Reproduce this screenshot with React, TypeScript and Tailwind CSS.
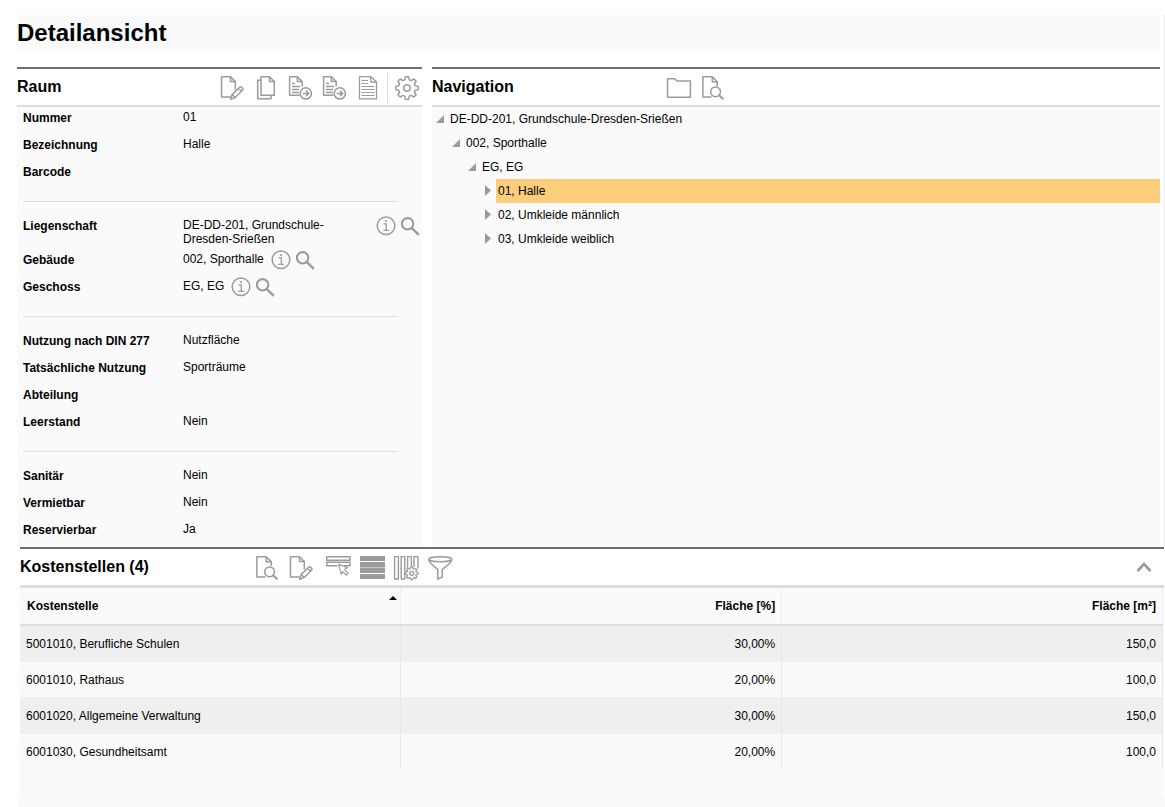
import { FC, ReactNode } from "react";

const gearPath = (cx: number, cy: number, outer: number, inner: number) => {
	const point = (deg: number, r: number) => {
		const a = (deg * Math.PI) / 180;
		return `${(cx + r * Math.sin(a)).toFixed(2)} ${(cy - r * Math.cos(a)).toFixed(2)}`;
	};
	let d = "";
	for (let i = 0; i < 8; i++) {
		const a = i * 45;
		d += `${i === 0 ? "M" : "L"}${point(a - 9, outer)}`;
		d += `Q${point(a, outer + 0.4)} ${point(a + 9, outer)}`;
		d += `L${point(a + 12, inner + 0.6)}Q${point(a + 22.5, inner - 1)} ${point(a + 33, inner + 0.6)}`;
	}
	return d + "Z";
};

const Icon: FC<{ children: ReactNode }> = ({ children }) => (
	<svg
		viewBox="0 0 26 26"
		className="w-[26px] h-[26px]"
		fill="none"
		stroke="#9b9b9b"
		strokeWidth="1.5"
		strokeLinejoin="round"
	>
		{children}
	</svg>
);

const EditIcon = () => (
	<Icon>
		<path d="M16.3 14.5V6.5L11.5 1.7H2.5V22H11.5M11.5 1.7V6.5H16.3" />
		<path d="M11.6 24.2L13.1 19.6L20.9 12Q21.6 11.4 22.4 12.1L23.7 13.4Q24.4 14.1 23.7 14.9L16.2 22.6L11.6 24.2ZM13.3 19.8L16 22.4M19.6 13.4L22.3 16.1" />
	</Icon>
);

const CopyIcon = () => (
	<Icon>
		<path d="M7.8 5.2H4.7V23.7H18V20.5" />
		<path d="M8 1.7H16.5L21.3 6.5V20.2H8ZM16.5 1.7V6.5H21.3" />
	</Icon>
);

const ExportIcon = () => (
	<Icon>
		<path d="M15.2 11.5V6.5L10.4 1.7H2.6V20.2H12.5M10.4 1.7V6.5H15.2" />
		<path d="M5 8.5H8M5 11.5H13M5 14.5H12M5 17.5H12" strokeWidth="1.3" />
		<circle cx="18.8" cy="18.4" r="5.6" />
		<path d="M15.6 18.4H21.6M19 15.7L21.7 18.4L19 21.1" />
	</Icon>
);

const ListIcon = () => (
	<Icon>
		<path d="M4.5 1.6H15.7L21.5 7V23.8H4.5ZM15.7 1.6V7H21.5" strokeWidth="1.3" />
		<path d="M6.5 5.5H13M6.5 8.5H13M6.5 11.5H19.5M6.5 14.5H19.5M6.5 17.5H19.5M6.5 20.5H19.5" strokeWidth="1" />
	</Icon>
);

const GearIcon = () => (
	<Icon>
		<path d={gearPath(13, 13, 11.2, 8.6)} />
		<circle cx="13" cy="13" r="3.2" />
	</Icon>
);

const FolderIcon = () => (
	<Icon>
		<path d="M1.5 22.3V3.7H9L10.8 6H24.4V22.3Z" />
	</Icon>
);

const PreviewIcon = () => (
	<Icon>
		<path d="M17.3 11V6.8L12.3 1.7H2.9V22H11.5M12.3 1.7V6.8H17.3" />
		<circle cx="15.6" cy="16.8" r="4.9" />
		<path d="M19 20.2L23.4 24.3" strokeWidth="2" />
	</Icon>
);

const SelectIcon = () => (
	<Icon>
		<path d="M1.7 1.7H25V5.2H1.7ZM12.5 10.8H1.7V7.3H25V10.8H19" />
		<path d="M13.6 9.4L22.6 12.6L19.6 14.6L23.2 18.4L21.4 20.2L17.7 16.6L16.2 19.2Z" fill="#fff" strokeWidth="1.2" />
	</Icon>
);

const RowsIcon = () => (
	<Icon>
		<g fill="#9b9b9b" stroke="none">
			<rect x="1" y="1" width="25" height="5" />
			<rect x="1" y="7" width="25" height="5" />
			<rect x="1" y="12" width="25" height="1" fill="#c8c8c8" />
			<rect x="1" y="13" width="25" height="5" />
			<rect x="1" y="19" width="25" height="5" />
		</g>
	</Icon>
);

const ColumnsIcon = () => (
	<Icon>
		<path d="M1.6 1.6H5.4V24H1.6ZM8.2 1.6H11.8V24H8.2ZM14.6 24V1.6H18.4V12M21 12V1.6H25V13.5" strokeWidth="1.4" />
		<path d={gearPath(18.7, 18.3, 6.2, 4.9)} fill="#fff" strokeWidth="1.3" />
		<circle cx="18.7" cy="18.3" r="2" strokeWidth="1.3" />
	</Icon>
);

const FilterIcon = () => (
	<Icon>
		<ellipse cx="13.3" cy="4.3" rx="11.5" ry="2.5" />
		<path d="M1.8 4.5C1.8 8 8 12 10.8 14.5V24.2L15.2 22V14.5C18 12 24.8 8 24.8 4.5" />
	</Icon>
);

const InfoIcon = () => (
	<svg viewBox="0 0 20 20" className="w-5 h-5" fill="none" stroke="#9b9b9b">
		<circle cx="10" cy="9.7" r="8.8" strokeWidth="1.5" />
		<circle cx="10" cy="5" r="1.1" fill="#9b9b9b" stroke="none" />
		<path d="M7.6 7.8H10.3V14.2M7.3 14.3H13" strokeWidth="1.3" />
	</svg>
);

const SearchIcon = () => (
	<svg viewBox="0 0 20 20" className="w-5 h-5" fill="none" stroke="#9b9b9b">
		<circle cx="6.6" cy="7.8" r="5.7" strokeWidth="2.1" />
		<path d="M10.6 11.8L17.8 18.8" strokeWidth="2.4" />
	</svg>
);

type ITool = { label: string; icon: ReactNode };

const ToolButtons: FC<{ tools: ITool[] }> = ({ tools }) => (
	<div className="flex gap-2">
		{tools.map((tool) => (
			<button key={tool.label} type="button" aria-label={tool.label}>
				{tool.icon}
			</button>
		))}
	</div>
);

const roomTools: ITool[] = [
	{ label: "Bearbeiten", icon: <EditIcon /> },
	{ label: "Kopieren", icon: <CopyIcon /> },
	{ label: "Exportieren", icon: <ExportIcon /> },
	{ label: "Bericht exportieren", icon: <ExportIcon /> },
	{ label: "Bericht", icon: <ListIcon /> },
];

const navTools: ITool[] = [
	{ label: "Ordner", icon: <FolderIcon /> },
	{ label: "Vorschau", icon: <PreviewIcon /> },
];

const recordTools: ITool[] = [
	{ label: "Vorschau", icon: <PreviewIcon /> },
	{ label: "Bearbeiten", icon: <EditIcon /> },
];

const tableTools: ITool[] = [
	{ label: "Auswahl", icon: <SelectIcon /> },
	{ label: "Zeilen", icon: <RowsIcon /> },
	{ label: "Spalten", icon: <ColumnsIcon /> },
	{ label: "Filter", icon: <FilterIcon /> },
];

type IField = { label: string; value?: string; linked?: boolean };

const fieldGroups: IField[][] = [
	[
		{ label: "Nummer", value: "01" },
		{ label: "Bezeichnung", value: "Halle" },
		{ label: "Barcode" },
	],
	[
		{ label: "Liegenschaft", value: "DE-DD-201, Grundschule-Dresden-Srießen", linked: true },
		{ label: "Gebäude", value: "002, Sporthalle", linked: true },
		{ label: "Geschoss", value: "EG, EG", linked: true },
	],
	[
		{ label: "Nutzung nach DIN 277", value: "Nutzfläche" },
		{ label: "Tatsächliche Nutzung", value: "Sporträume" },
		{ label: "Abteilung" },
		{ label: "Leerstand", value: "Nein" },
	],
	[
		{ label: "Sanitär", value: "Nein" },
		{ label: "Vermietbar", value: "Nein" },
		{ label: "Reservierbar", value: "Ja" },
	],
];

const Field: FC<IField> = ({ label, value, linked }) => (
	<div className="flex min-h-[27px] pl-1.5 pr-px leading-[14px]">
		<dt className="w-40 shrink-0 pt-1 font-bold">{label}</dt>
		<dd className="flex min-w-0 items-start">
			<span className="py-[3px]">{value}</span>
			{linked && (
				<span className="flex shrink-0 gap-[5px] pt-px pl-[7px]">
					<button type="button" aria-label={`${label} Info`}>
						<InfoIcon />
					</button>
					<button type="button" aria-label={`${label} suchen`}>
						<SearchIcon />
					</button>
				</span>
			)}
		</dd>
	</div>
);

const RoomPanel = () => (
	<section className="flex flex-col border-t-2 border-[#6e6e6e]">
		<header className="flex h-[38px] items-center justify-between border-b-2 border-[#dddddd] pr-0.5">
			<h2 className="text-base font-bold">Raum</h2>
			<div className="flex items-center pt-0.5">
				<ToolButtons tools={roomTools} />
				<div className="mx-1.5 h-[30px] w-px bg-[#dddddd]" />
				<button type="button" aria-label="Einstellungen">
					<GearIcon />
				</button>
			</div>
		</header>
		<div className="bg-[#fafafa]">
			{fieldGroups.map((fields, index) => (
				<div key={index}>
					{index > 0 && <hr className="mt-[13px] mb-[13px] ml-1.5 mr-[25px] border-[#dddddd]" />}
					<dl>
						{fields.map((field) => (
							<Field key={field.label} {...field} />
						))}
					</dl>
				</div>
			))}
		</div>
	</section>
);

type INode = { text: string; indent: string; open?: boolean; selected?: boolean };

const nodes: INode[] = [
	{ text: "DE-DD-201, Grundschule-Dresden-Srießen", indent: "pl-0", open: true },
	{ text: "002, Sporthalle", indent: "pl-4", open: true },
	{ text: "EG, EG", indent: "pl-8", open: true },
	{ text: "01, Halle", indent: "pl-12", selected: true },
	{ text: "02, Umkleide männlich", indent: "pl-12" },
	{ text: "03, Umkleide weiblich", indent: "pl-12" },
];

const NavigationPanel = () => (
	<section className="flex flex-col border-t-2 border-[#6e6e6e]">
		<header className="flex h-[38px] items-center border-b-2 border-[#dddddd]">
			<h2 className="w-[234px] text-base font-bold">Navigation</h2>
			<div className="pt-0.5">
				<ToolButtons tools={navTools} />
			</div>
		</header>
		<ul className="flex-1 bg-[#fafafa]">
			{nodes.map((node) => (
				<li key={node.text} className={`flex h-6 ${node.indent}`}>
					<button type="button" className="w-4" aria-label={`${node.text} umschalten`} aria-expanded={!!node.open}>
						<svg viewBox="0 0 16 24" className="h-6 w-4" fill="#999999">
							<path d={node.open ? "M12 8V16H4Z" : "M5 6L11 11.5L5 17Z"} />
						</svg>
					</button>
					<a href="#" className={node.selected ? "flex-1 bg-[#fccd7b] pl-0.5 leading-6" : "flex-1 pl-0.5 leading-6"}>
						{node.text}
					</a>
				</li>
			))}
		</ul>
	</section>
);

const costCenters = [
	{ name: "5001010, Berufliche Schulen", percent: "30,00%", area: "150,0" },
	{ name: "6001010, Rathaus", percent: "20,00%", area: "100,0" },
	{ name: "6001020, Allgemeine Verwaltung", percent: "30,00%", area: "150,0" },
	{ name: "6001030, Gesundheitsamt", percent: "20,00%", area: "100,0" },
];

const CostCenterPanel = () => (
	<section className="mt-px ml-[3px] mr-px border-t-2 border-[#6e6e6e]">
		<header className="flex h-[39px] items-center border-b-3 border-[#dddddd]">
			<h2 className="w-[234px] text-base font-bold">Kostenstellen (4)</h2>
			<div className="flex gap-[11px] pt-0.5">
				<ToolButtons tools={recordTools} />
				<ToolButtons tools={tableTools} />
			</div>
			<button type="button" aria-label="Einklappen" className="ml-auto mr-3">
				<svg viewBox="0 0 16 10" className="h-2.5 w-4" fill="none" stroke="#999999" strokeWidth="2.6">
					<path d="M1.5 9L8 2L14.5 9" />
				</svg>
			</button>
		</header>
		<div className="bg-[#fafafa] pr-px pb-7">
			<table className="w-full table-fixed border-collapse">
				<thead>
					<tr className="h-[37px] border-b-2 border-[#dddddd]">
						<th className="relative border-r border-[#eeeeee] px-[7px] text-left">
							Kostenstelle
							<svg viewBox="0 0 8 4" className="absolute top-2 right-[3px] h-1 w-2" fill="#000">
								<path d="M0 4L4 0L8 4Z" />
							</svg>
						</th>
						<th className="border-r border-[#eeeeee] px-1.5 text-right">Fläche [%]</th>
						<th className="border-r border-[#eeeeee] px-1.5 text-right">Fläche [m²]</th>
					</tr>
				</thead>
				<tbody>
					{costCenters.map((row) => (
						<tr key={row.name} className="odd:h-[37px] odd:bg-[#efefef] even:h-[35px]">
							<td className="border-r border-[#e8e8e8] px-1.5">{row.name}</td>
							<td className="border-r border-[#e8e8e8] px-1.5 text-right">{row.percent}</td>
							<td className="border-r border-[#e8e8e8] px-1.5 text-right">{row.area}</td>
						</tr>
					))}
				</tbody>
			</table>
		</div>
	</section>
);

export const App: FC = () => {
	return (
		<main className="flex min-h-screen flex-col bg-white pt-[15px] pl-[17px] font-['Liberation_Sans',Arial,sans-serif] text-xs text-black">
			<div className="border-r border-[#eeeeee] pr-1">
				<h1 className="mb-4 h-9 bg-[#fafafa] text-2xl leading-9 font-bold">Detailansicht</h1>
				<div className="grid grid-cols-[405fr_728fr] gap-2.5">
					<RoomPanel />
					<NavigationPanel />
				</div>
			</div>
			<CostCenterPanel />
			<div className="flex-1 bg-[#fafafa]" />
		</main>
	);
};

export default App;
